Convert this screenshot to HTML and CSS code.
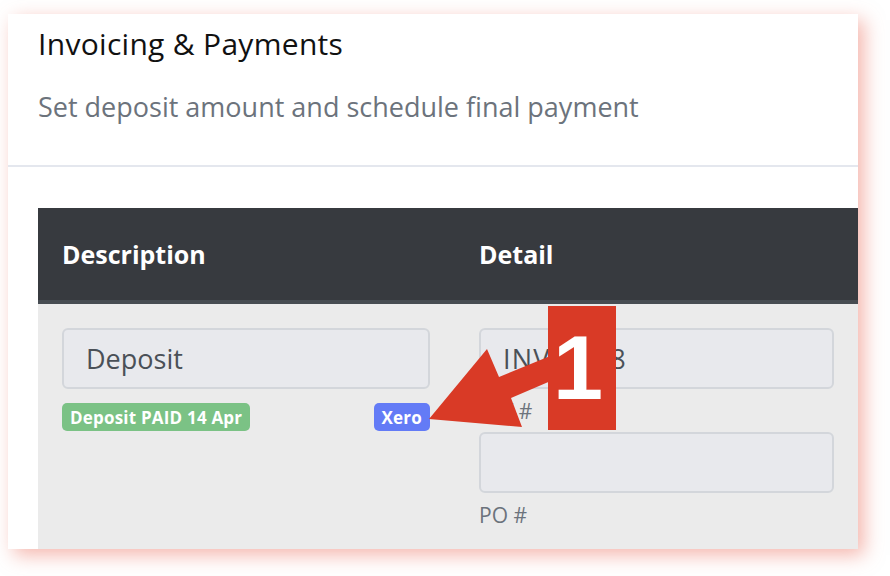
FILE: index.html
```html
<!DOCTYPE html>
<html lang="en">
<head>
<meta charset="utf-8">
<title>Invoicing &amp; Payments</title>
<link rel="stylesheet" href="styles.css">
</head>
<body>
<div class="stage">
  <section class="card">
    <header class="card-head">
      <h1 class="title">Invoicing &amp; Payments</h1>
      <p class="subtitle">Set deposit amount and schedule final payment</p>
    </header>
    <div class="card-body">
      <div class="table">
        <div class="thead">
          <div class="th">Description</div>
          <div class="th">Detail</div>
        </div>
        <div class="trow">
          <div class="td">
            <div class="input">Deposit</div>
            <div class="badges">
              <span class="badge badge-green">Deposit PAID 14 Apr</span>
              <span class="badge badge-blue">Xero</span>
            </div>
          </div>
          <div class="td">
            <div class="input input-code">INV-0038</div>
            <div class="label">INV #</div>
            <div class="input"></div>
            <div class="label">PO #</div>
          </div>
        </div>
      </div>
    </div>
  </section>
  <div class="callout">
    <svg class="arrow" width="890" height="576" viewBox="0 0 890 576">
      <polygon points="429,419 487,349 499,377 560,352 560,377 511,398 522,427" fill="#d93a26"/>
    </svg>
    <div class="num">1</div>
  </div>
</div>
</body>
</html>
```

FILE: styles.css
```css
* { box-sizing: border-box; }
html, body { margin: 0; padding: 0; background: #ffffff; }
body {
  width: 890px;
  height: 576px;
  overflow: hidden;
  font-family: "Open Sans", "Lato", sans-serif;
}
.stage {
  position: relative;
  width: 890px;
  height: 576px;
  padding: 14px 32px 27px 8px;
}
.card {
  height: 535px;
  width: 850px;
  background: #ffffff;
  overflow: hidden;
  box-shadow: 6px 6px 18px rgba(236, 110, 92, 0.5);
  display: flex;
  flex-direction: column;
}
.card-head {
  padding: 10px 30px 0 30px;
  height: 153px;
  border-bottom: 2px solid #e4e7ee;
}
.title {
  margin: 0;
  font-size: 30px;
  font-weight: 400;
  letter-spacing: 0.3px;
  color: #111111;
  line-height: 40px;
}
.subtitle {
  margin: 25px 0 0 0;
  font-size: 27px;
  color: #6c737c;
  line-height: 36px;
}
.card-body {
  padding: 41px 0 0 30px;
  flex: 1;
}
.table {
  width: 820px;
  height: 100%;
  display: flex;
  flex-direction: column;
  background: #ebebeb;
}
.thead {
  display: grid;
  grid-template-columns: 417px 1fr;
  height: 96px;
  background: #373a3f;
  border-bottom: 4px solid #474c52;
}
.th {
  padding: 0 24px;
  display: flex;
  align-items: center;
  color: #ffffff;
  font-weight: 700;
  font-size: 25px;
}
.trow {
  display: grid;
  grid-template-columns: 417px 1fr;
  padding-top: 24px;
}
.td {
  padding: 0 24px;
  display: flex;
  flex-direction: column;
}
.td:first-child { padding-right: 25px; }
.input {
  height: 61px;
  border: 2px solid #d3d6db;
  border-radius: 6px;
  background: #e8e9ed;
  padding: 0 22px;
  display: flex;
  align-items: center;
  font-size: 27px;
  color: #4a5057;
}
.input-code { letter-spacing: 1.2px; }
.badges {
  margin-top: 14px;
  display: flex;
  justify-content: space-between;
}
.badge {
  height: 28px;
  padding: 0 8px;
  border-radius: 5px;
  color: #ffffff;
  font-weight: 700;
  font-size: 17px;
  letter-spacing: 0.2px;
  display: flex;
  align-items: center;
}
.badge-green { background: #7bc285; }
.badge-blue { background: #637bf6; }
.label {
  height: 43px;
  display: flex;
  align-items: center;
  font-size: 21px;
  color: #6c737c;
}
.callout {
  position: absolute;
  left: 0;
  top: 0;
  width: 890px;
  height: 576px;
  pointer-events: none;
}
.arrow {
  position: absolute;
  left: 0;
  top: 0;
}
.num {
  position: absolute;
  left: 548px;
  top: 306px;
  width: 68px;
  height: 124px;
  background: #d93a26;
  color: #ffffff;
  font-family: "Liberation Sans", Arial, sans-serif;
  font-weight: 700;
  font-size: 90px;
  line-height: 124px;
  text-align: center;
  padding-right: 8px;
}
```
